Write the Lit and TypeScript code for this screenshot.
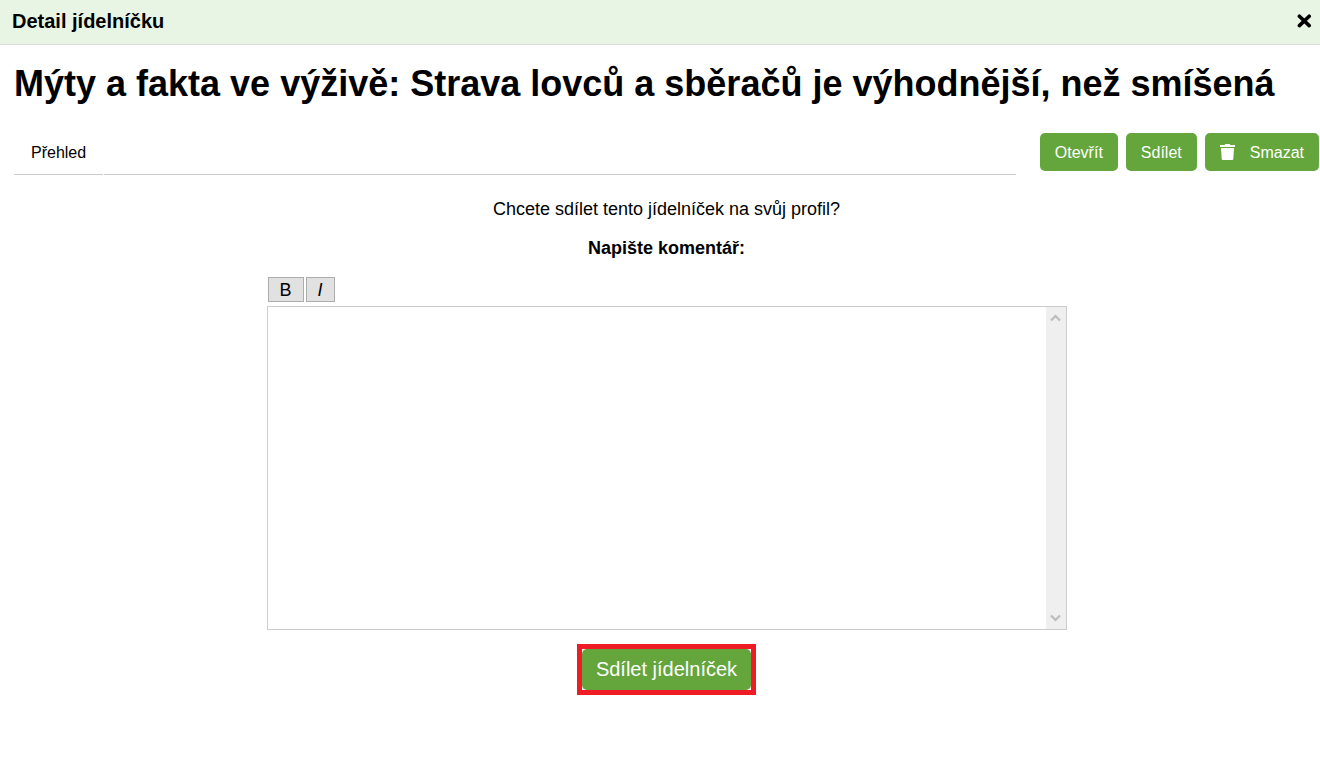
import { LitElement, html, css } from "lit";
import { customElement } from "lit/decorators.js";

@customElement("app-root")
export class AppRoot extends LitElement {
  static styles = css`
    :host {
      display: block;
      font-family: Arial, "Liberation Sans", sans-serif;
      font-size: 16px;
      color: #000;
      background: #fff;
    }
    * {
      box-sizing: border-box;
    }
    button {
      font: inherit;
      cursor: pointer;
    }
    .bar {
      display: flex;
      align-items: center;
      justify-content: space-between;
      padding: 9px 8px 11px 12px;
      background: #e8f5e4;
      border-bottom: 1px solid #dcdcdc;
    }
    .bar-title {
      margin: 0;
      font-size: 20px;
      line-height: 24px;
    }
    .close {
      display: flex;
      padding: 0;
      border: 0;
      background: none;
      color: #000;
    }
    .content {
      padding: 17px 0 0 14px;
    }
    .title {
      margin: 0;
      font-size: 36px;
      line-height: 44px;
    }
    .row {
      display: flex;
      align-items: flex-start;
      gap: 24px;
      padding: 27px 1px 0 0;
    }
    .tabs {
      display: flex;
      flex: 1;
      gap: 1px;
    }
    .tab {
      padding: 10px 17px 11px;
      line-height: 20px;
      color: #000;
      text-decoration: none;
      border-bottom: 1px solid #ccc;
    }
    .tabs-rest {
      flex: 1;
      border-bottom: 1px solid #ccc;
    }
    .actions {
      display: flex;
      gap: 8px;
    }
    .btn {
      display: flex;
      align-items: center;
      gap: 15px;
      padding: 10px 15px 8px;
      border: 0;
      border-radius: 5px;
      background: #64a63c;
      color: #fff;
      line-height: 20px;
    }
    .share {
      display: flex;
      flex-direction: column;
      align-items: center;
      padding: 22px 1px 0 0;
      font-size: 18px;
      line-height: 24px;
    }
    .question {
      margin: 0 0 15px;
    }
    .label {
      font-weight: bold;
    }
    .editor {
      width: 100%;
      max-width: 800px;
      margin: 17px 0 14px;
    }
    .tools {
      display: flex;
      gap: 2px;
      padding: 0 1px 4px;
    }
    .tool {
      padding: 1px 11px 0;
      border: 1px solid #adadad;
      background: #e1e1e1;
      color: #000;
      line-height: 22px;
    }
    .italic {
      font-style: italic;
    }
    .field {
      display: flex;
      height: 324px;
      border: 1px solid #ccc;
    }
    .text {
      flex: 1;
      min-width: 0;
      padding: 4px;
      border: 0;
      outline: 0;
      resize: none;
      overflow: hidden;
      font: inherit;
      background: #fff;
    }
    .rail {
      display: flex;
      flex-direction: column;
      justify-content: space-between;
      align-items: center;
      width: 20px;
      padding: 7px 1px 7px 0;
      background: #efefef;
    }
    .highlight {
      padding: 5px;
      background: linear-gradient(#fff, #fff) content-box, #ee1c25;
    }
    .submit {
      padding: 8px 14px 9px;
      font-size: 20px;
      line-height: 24px;
    }
    svg {
      display: block;
    }
  `;

  render() {
    return html`
      <header class="bar">
        <h2 class="bar-title">Detail jídelníčku</h2>
        <button class="close" type="button" aria-label="Zavřít">
          <svg width="15" height="14" viewBox="0 0 15 14" aria-hidden="true">
            <path d="M2.4 2.2 12.2 11.6M12.2 2.2 2.4 11.6" stroke="currentColor" stroke-width="3.6" stroke-linecap="round" />
          </svg>
        </button>
      </header>
      <main class="content">
        <h1 class="title">Mýty a fakta ve výživě: Strava lovců a sběračů je výhodnější, než smíšená</h1>
        <div class="row">
          <nav class="tabs">
            <a class="tab" href="#prehled">Přehled</a>
            <div class="tabs-rest"></div>
          </nav>
          <div class="actions">
            <button class="btn" type="button">Otevřít</button>
            <button class="btn" type="button">Sdílet</button>
            <button class="btn" type="button">
              <svg width="15" height="18" viewBox="0 0 15 18" aria-hidden="true">
                <path fill="currentColor" d="M0 1h4.6L5.4 0h4.2l.8 1H15v2H0zM1 4h13l-.7 11q-.1 1-1.1 1H2.8q-1 0-1.1-1z" />
              </svg>
              Smazat
            </button>
          </div>
        </div>
        <section class="share">
          <p class="question">Chcete sdílet tento jídelníček na svůj profil?</p>
          <label class="label" for="comment">Napište komentář:</label>
          <div class="editor">
            <div class="tools">
              <button class="tool" type="button">B</button>
              <button class="tool italic" type="button">I</button>
            </div>
            <div class="field">
              <textarea class="text" id="comment"></textarea>
              <div class="rail" aria-hidden="true">
                <svg width="11" height="8" viewBox="0 0 11 8">
                  <path d="M1 6.5 5.5 2 10 6.5" fill="none" stroke="#bcbcbc" stroke-width="2.2" />
                </svg>
                <svg width="11" height="8" viewBox="0 0 11 8">
                  <path d="M1 1.5 5.5 6 10 1.5" fill="none" stroke="#bcbcbc" stroke-width="2.2" />
                </svg>
              </div>
            </div>
          </div>
          <div class="highlight">
            <button class="btn submit" type="button">Sdílet jídelníček</button>
          </div>
        </section>
      </main>
    `;
  }
}
